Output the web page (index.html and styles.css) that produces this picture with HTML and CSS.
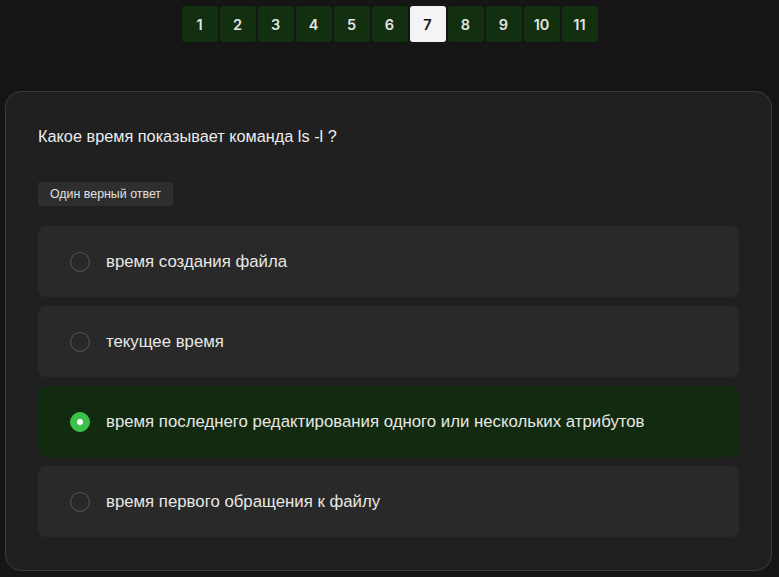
FILE: index.html
```html
<!DOCTYPE html>
<html lang="ru">
<head>
<meta charset="utf-8">
<link rel="stylesheet" href="styles.css">
</head>
<body>
<nav class="pager">
  <button class="page">1</button>
  <button class="page">2</button>
  <button class="page">3</button>
  <button class="page">4</button>
  <button class="page">5</button>
  <button class="page">6</button>
  <button class="page current">7</button>
  <button class="page">8</button>
  <button class="page">9</button>
  <button class="page">10</button>
  <button class="page">11</button>
</nav>
<main class="card">
  <p class="question">Какое время показывает команда ls -l ?</p>
  <span class="badge">Один верный ответ</span>
  <ul class="options">
    <li class="option"><span class="radio"></span><span class="label">время создания файла</span></li>
    <li class="option"><span class="radio"></span><span class="label">текущее время</span></li>
    <li class="option selected"><span class="radio"></span><span class="label">время последнего редактирования одного или нескольких атрибутов</span></li>
    <li class="option"><span class="radio"></span><span class="label">время первого обращения к файлу</span></li>
  </ul>
</main>
</body>
</html>
```

FILE: styles.css
```css
* { box-sizing: border-box; }
html, body { margin: 0; padding: 0; }
body {
  background: #151515;
  font-family: "Liberation Sans", Arial, sans-serif;
  color: #e6e6e6;
  width: 779px;
  height: 577px;
  overflow: hidden;
}
.pager {
  display: flex;
  justify-content: center;
  gap: 2px;
  padding-top: 6px;
}
.page {
  width: 36px;
  height: 36px;
  border: none;
  border-radius: 3px;
  background: #12300f;
  color: #e4e4e4;
  font-family: Inter, "Liberation Sans", sans-serif;
  font-weight: 600;
  font-size: 14.5px;
  padding: 0;
}
.page.current {
  background: #f4f4f6;
  color: #111;
}
.card {
  margin: 49px 7px 0 5px;
  background: #202020;
  border: 1px solid #3b3b3b;
  border-radius: 16px;
  padding: 32px;
  height: 480px;
}
.question {
  margin: 0;
  font-size: 16.3px;
  line-height: 24px;
  color: #ececec;
}
.badge {
  display: inline-block;
  margin-top: 34px;
  height: 24px;
  line-height: 24px;
  padding: 0 12px;
  background: #2e2e2e;
  border-radius: 3px;
  font-size: 12.4px;
  color: #e0e0e0;
}
.options {
  list-style: none;
  margin: 20px 0 0;
  padding: 0;
  display: flex;
  flex-direction: column;
  gap: 9px;
}
.option {
  height: 71px;
  background: #292929;
  border-radius: 8px;
  display: flex;
  align-items: center;
  padding-left: 32px;
  gap: 16px;
  font-size: 16.8px;
  color: #e8e8e4;
}
.option.selected { background: #112a10; }
.radio {
  width: 20px;
  height: 20px;
  border-radius: 50%;
  border: 1px solid #555;
  flex: none;
  position: relative;
}
.selected .radio {
  background: #3cc14b;
  border-color: #3cc14b;
}
.selected .radio::after {
  content: "";
  position: absolute;
  left: 50%;
  top: 50%;
  width: 6px;
  height: 6px;
  margin: -3px 0 0 -3px;
  border-radius: 50%;
  background: #fff;
}
```
